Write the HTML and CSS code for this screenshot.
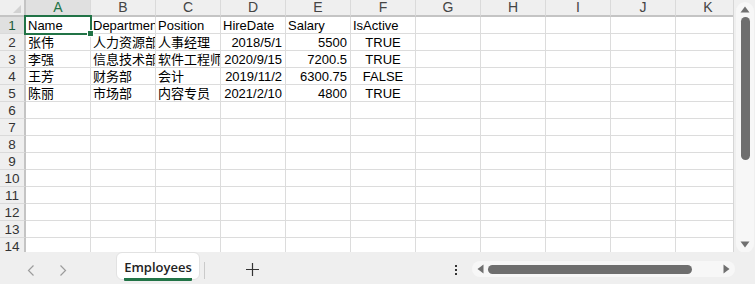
FILE: index.html
```html
<!DOCTYPE html>
<html lang="zh-CN">
<head>
    <meta charset="utf-8" />
    <title>Employees</title>
    <link rel="stylesheet" href="styles.css">
</head>
<body>
    <div class="app">
        <div class="main">
            <div class="sheet">
                <div class="grid">
                    <!-- column headers -->
                    <div class="corner"><span class="tri"></span></div>
                    <div class="ch on">A</div><div class="ch">B</div><div class="ch">C</div><div class="ch">D</div><div class="ch">E</div><div class="ch">F</div><div class="ch">G</div><div class="ch">H</div><div class="ch">I</div><div class="ch">J</div><div class="ch">K</div>

                    <div class="rh on">1</div>
                    <div class="c active">Name</div><div class="c">Department</div><div class="c">Position</div><div class="c">HireDate</div><div class="c">Salary</div><div class="c">IsActive</div><div class="c"></div><div class="c"></div><div class="c"></div><div class="c"></div><div class="c"></div>

                    <div class="rh">2</div>
                    <div class="c">张伟</div><div class="c">人力资源部</div><div class="c">人事经理</div><div class="c num">2018/5/1</div><div class="c num">5500</div><div class="c mid">TRUE</div><div class="c"></div><div class="c"></div><div class="c"></div><div class="c"></div><div class="c"></div>

                    <div class="rh">3</div>
                    <div class="c">李强</div><div class="c">信息技术部</div><div class="c">软件工程师</div><div class="c num">2020/9/15</div><div class="c num">7200.5</div><div class="c mid">TRUE</div><div class="c"></div><div class="c"></div><div class="c"></div><div class="c"></div><div class="c"></div>

                    <div class="rh">4</div>
                    <div class="c">王芳</div><div class="c">财务部</div><div class="c">会计</div><div class="c num">2019/11/2</div><div class="c num">6300.75</div><div class="c mid">FALSE</div><div class="c"></div><div class="c"></div><div class="c"></div><div class="c"></div><div class="c"></div>

                    <div class="rh">5</div>
                    <div class="c">陈丽</div><div class="c">市场部</div><div class="c">内容专员</div><div class="c num">2021/2/10</div><div class="c num">4800</div><div class="c mid">TRUE</div><div class="c"></div><div class="c"></div><div class="c"></div><div class="c"></div><div class="c"></div>

                    <div class="rh">6</div><div class="c"></div><div class="c"></div><div class="c"></div><div class="c"></div><div class="c"></div><div class="c"></div><div class="c"></div><div class="c"></div><div class="c"></div><div class="c"></div><div class="c"></div>
                    <div class="rh">7</div><div class="c"></div><div class="c"></div><div class="c"></div><div class="c"></div><div class="c"></div><div class="c"></div><div class="c"></div><div class="c"></div><div class="c"></div><div class="c"></div><div class="c"></div>
                    <div class="rh">8</div><div class="c"></div><div class="c"></div><div class="c"></div><div class="c"></div><div class="c"></div><div class="c"></div><div class="c"></div><div class="c"></div><div class="c"></div><div class="c"></div><div class="c"></div>
                    <div class="rh">9</div><div class="c"></div><div class="c"></div><div class="c"></div><div class="c"></div><div class="c"></div><div class="c"></div><div class="c"></div><div class="c"></div><div class="c"></div><div class="c"></div><div class="c"></div>
                    <div class="rh">10</div><div class="c"></div><div class="c"></div><div class="c"></div><div class="c"></div><div class="c"></div><div class="c"></div><div class="c"></div><div class="c"></div><div class="c"></div><div class="c"></div><div class="c"></div>
                    <div class="rh">11</div><div class="c"></div><div class="c"></div><div class="c"></div><div class="c"></div><div class="c"></div><div class="c"></div><div class="c"></div><div class="c"></div><div class="c"></div><div class="c"></div><div class="c"></div>
                    <div class="rh">12</div><div class="c"></div><div class="c"></div><div class="c"></div><div class="c"></div><div class="c"></div><div class="c"></div><div class="c"></div><div class="c"></div><div class="c"></div><div class="c"></div><div class="c"></div>
                    <div class="rh">13</div><div class="c"></div><div class="c"></div><div class="c"></div><div class="c"></div><div class="c"></div><div class="c"></div><div class="c"></div><div class="c"></div><div class="c"></div><div class="c"></div><div class="c"></div>
                    <div class="rh">14</div><div class="c"></div><div class="c"></div><div class="c"></div><div class="c"></div><div class="c"></div><div class="c"></div><div class="c"></div><div class="c"></div><div class="c"></div><div class="c"></div><div class="c"></div>
                </div>
            </div>

            <div class="vscroll">
                <div class="vtrack">
                    <svg class="arr" width="10" height="7" viewBox="0 0 10 7"><path d="M5 0.5 L9.5 6.5 L0.5 6.5 Z" fill="#707070"/></svg>
                    <div class="vthumb"></div>
                    <div class="vspace"></div>
                    <svg class="arr" width="10" height="7" viewBox="0 0 10 7"><path d="M0.5 0.5 L9.5 0.5 L5 6.5 Z" fill="#707070"/></svg>
                </div>
            </div>
        </div>

        <div class="bar">
            <div class="nav">
                <svg width="8" height="11" viewBox="0 0 8 11"><path d="M6.5 0.5 L1.5 5.5 L6.5 10.5" fill="none" stroke="#9c9c9c" stroke-width="1.2"/></svg>
            </div>
            <div class="nav">
                <svg width="8" height="11" viewBox="0 0 8 11"><path d="M1.5 0.5 L6.5 5.5 L1.5 10.5" fill="none" stroke="#9c9c9c" stroke-width="1.2"/></svg>
            </div>
            <div class="tab"><span class="tab-label">Employees</span></div>
            <div class="sep"></div>
            <div class="add">
                <svg width="13" height="13" viewBox="0 0 13 13"><path d="M6.5 0 V13 M0 6.5 H13" stroke="#333" stroke-width="1.2"/></svg>
            </div>
            <div class="more"><span></span><span></span><span></span></div>
            <div class="htrack">
                <svg width="7" height="10" viewBox="0 0 7 10"><path d="M0.5 5 L6.5 0.5 L6.5 9.5 Z" fill="#707070"/></svg>
                <div class="hthumb"></div>
                <svg width="7" height="10" viewBox="0 0 7 10"><path d="M0.5 0.5 L6.5 5 L0.5 9.5 Z" fill="#707070"/></svg>
            </div>
        </div>
    </div>
</body>
</html>
```

FILE: styles.css
```css
body {
    margin: 0;
    background: #efefef;
    font-family: "Liberation Sans", Arial, "Noto Sans CJK SC", sans-serif;
}
.app {
    width: 755px;
    height: 284px;
    display: flex;
    flex-direction: column;
    overflow: hidden;
}
.main {
    height: 252px;
    display: flex;
}
.sheet {
    width: 733px;
    height: 252px;
    overflow: hidden;
    background: #fff;
    border-right: 1px solid #d6d6d6;
}
.grid {
    display: grid;
    grid-template-columns: 26px repeat(11, 65px);
    grid-template-rows: 17px repeat(14, 17px);
    width: 741px;
}
.corner {
    position: relative;
    background: #efefef;
    border-right: 2px solid #c4c4c4;
    border-bottom: 2px solid #c4c4c4;
}
.tri {
    position: absolute;
    right: 3px;
    bottom: 2px;
    width: 0;
    height: 0;
    border-left: 8px solid transparent;
    border-bottom: 8px solid #d2d2d2;
}
.ch {
    background: #efefef;
    border-right: 1px solid #dadada;
    border-bottom: 2px solid #c4c4c4;
    color: #444;
    font-size: 14px;
    line-height: 15px;
    text-align: center;
}
.ch.on {
    background: #e0e0e0;
    color: #217346;
}
.rh {
    background: #efefef;
    border-right: 2px solid #c4c4c4;
    border-bottom: 1px solid #dadada;
    color: #333;
    font-size: 13.5px;
    line-height: 17px;
    text-align: center;
}
.rh.on {
    background: #e0e0e0;
    color: #1d5c3a;
}
.c {
    border-right: 1px solid #dcdcdc;
    border-bottom: 1px solid #dcdcdc;
    font-size: 13px;
    line-height: 17px;
    padding: 0 2px 0 2px;
    white-space: nowrap;
    overflow: hidden;
    color: #000;
}
.c.num {
    text-align: right;
    padding: 0 3px 0 2px;
}
.c.mid {
    text-align: center;
}
.c.active {
    position: relative;
    overflow: visible;
    z-index: 1;
}
.c.active::before {
    content: "";
    position: absolute;
    top: -2px;
    left: -2px;
    right: -2px;
    bottom: -2px;
    border: 2px solid #217346;
}
.c.active::after {
    content: "";
    position: absolute;
    right: -4px;
    bottom: -4px;
    width: 5px;
    height: 5px;
    background: #217346;
    border: 1px solid #fff;
}

/* vertical scrollbar */
.vscroll {
    width: 21px;
    padding: 2px 1px 0 2px;
    box-sizing: border-box;
    background: #efefef;
}
.vtrack {
    height: 251px;
    background: #f7f7f7;
    border-radius: 9px;
    display: flex;
    flex-direction: column;
    align-items: center;
    padding: 4px 0 5px;
    box-sizing: border-box;
}
.vthumb {
    width: 9px;
    height: 143px;
    margin-top: 4px;
    background: #6e6e6e;
    border-radius: 5px;
}
.vspace {
    flex: 1;
}

/* sheet tab bar */
.bar {
    height: 32px;
    display: flex;
    align-items: center;
    background: #efefef;
}
.nav {
    width: 32px;
    height: 20px;
    display: flex;
    align-items: center;
    justify-content: center;
    margin-top: 4px;
}
.nav:first-child {
    margin-left: 15px;
}
.tab {
    align-self: flex-start;
    margin-left: 37px;
    width: 84px;
    height: 28px;
    box-sizing: border-box;
    background: #fff;
    border: 1px solid #e2e2e2;
    border-radius: 6px;
    display: flex;
    justify-content: center;
    padding-top: 5px;
}
.tab-label {
    font-family: "Open Sans", "Liberation Sans", sans-serif;
    font-weight: 600;
    font-size: 13px;
    line-height: 18px;
    color: #222;
    height: 20px;
    border-bottom: 3px solid #217346;
    border-radius: 1px;
}
.sep {
    width: 1px;
    height: 17px;
    background: #cacaca;
    margin-left: 4px;
    margin-top: 4px;
}
.add {
    width: 32px;
    height: 20px;
    margin-left: 31px;
    margin-top: 2px;
    display: flex;
    align-items: center;
    justify-content: center;
}
.more {
    margin-left: 187px;
    width: 4px;
    display: flex;
    flex-direction: column;
    gap: 2px;
    margin-top: 3px;
}
.more span {
    width: 2px;
    height: 2px;
    background: #333;
}
.htrack {
    margin-left: 13px;
    width: 263px;
    height: 16px;
    margin-top: 2px;
    background: #f7f7f7;
    border-radius: 8px;
    display: flex;
    align-items: center;
    padding: 0 5px;
    box-sizing: border-box;
    gap: 4px;
}
.hthumb {
    flex: 1;
    height: 9px;
    margin-right: 27px;
    background: #6e6e6e;
    border-radius: 5px;
}
```
